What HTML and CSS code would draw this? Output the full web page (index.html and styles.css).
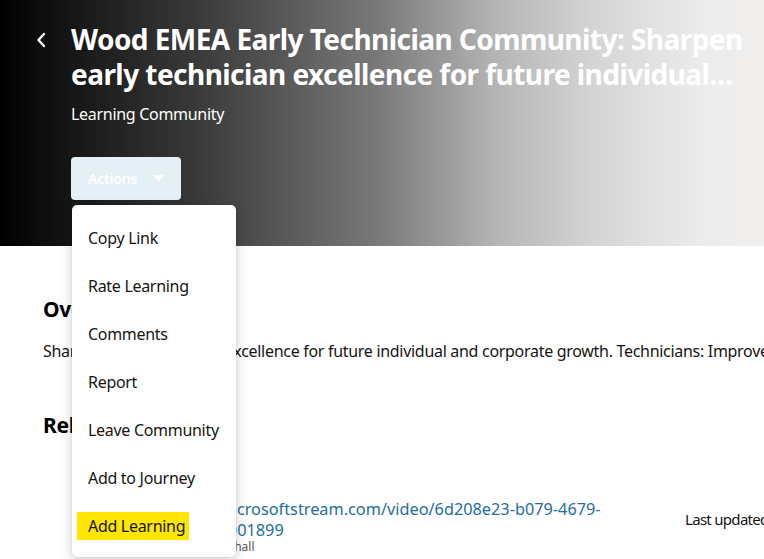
FILE: index.html
```html
<!DOCTYPE html>
<html lang="en">
<head>
<meta charset="utf-8">
<title>Wood EMEA Early Technician Community</title>
<link rel="stylesheet" href="styles.css">
</head>
<body>
<header class="hero">
  <div class="hero-row">
    <button class="back" aria-label="Back">
      <svg width="10" height="16" viewBox="0 0 10 16"><path d="M8 2 L2.5 8 L8 14" fill="none" stroke="#fff" stroke-width="2.4" stroke-linecap="round" stroke-linejoin="round"/></svg>
    </button>
    <div class="hero-text">
      <h1 class="title">Wood EMEA Early Technician Community: Sharpen early technician excellence for future individual and corporate growth</h1>
      <div class="subtitle">Learning Community</div>
      <div class="actions">
        <button class="actions-btn">Actions
          <svg width="12" height="7" viewBox="0 0 12 7"><path d="M0 0 H12 L6 7 Z" fill="#fff"/></svg>
        </button>
        <ul class="menu">
          <li>Copy Link</li>
          <li>Rate Learning</li>
          <li>Comments</li>
          <li>Report</li>
          <li>Leave Community</li>
          <li>Add to Journey</li>
          <li><span class="marked">Add Learning</span></li>
        </ul>
      </div>
    </div>
  </div>
</header>
<main class="content">
  <section class="overview">
    <h2>Overview</h2>
    <p class="desc">Sharpen early technician excellence for future individual and corporate growth. Technicians: Improve your skills and knowledge</p>
  </section>
  <section class="related">
    <h2>Related Learning</h2>
    <div class="rel-row">
      <div class="rel-main">
        <a class="rel-link" href="#">https://web.microsoftstream.com/video/6d208e23-b079-4679-a4f2-0c93eb7001899</a>
        <div class="rel-meta">By Jennifer W. Marshall</div>
      </div>
      <div class="rel-date">Last updated 2 years ago</div>
    </div>
  </section>
</main>
</body>
</html>
```
FILE: styles.css
```css
* { box-sizing: border-box; }
html, body { margin: 0; padding: 0; }
body {
  width: 764px;
  height: 559px;
  overflow: hidden;
  background: #fff;
  font-family: "Noto Sans", "Open Sans", sans-serif;
  color: #161513;
  letter-spacing: -0.3px;
}
.hero {
  height: 246px;
  background: linear-gradient(90deg, #000 0%, #151515 9%, #3a3a3a 26%, #7b7b7b 50%, #b5b5b5 65%, #d5d5d5 78%, #ececec 92%, #f1efed 100%);
  position: relative;
  z-index: 2;
}
.hero-row {
  display: flex;
  padding: 22px 6px 0 31px;
}
.back {
  width: 40px;
  height: 36px;
  padding: 0 0 0 5px;
  margin: 0;
  border: 0;
  background: transparent;
  display: flex;
  align-items: center;
  flex: none;
}
.hero-text { flex: 1; min-width: 0; }
.title {
  margin: 0;
  font-size: 28px;
  line-height: 35px;
  font-weight: 700;
  letter-spacing: -0.55px;
  color: #fff;
  display: -webkit-box;
  -webkit-line-clamp: 2;
  -webkit-box-orient: vertical;
  overflow: hidden;
}
.subtitle {
  margin-top: 10px;
  font-size: 16px;
  line-height: 24px;
  color: #fff;
}
.actions {
  position: relative;
  margin-top: 31px;
  width: 110px;
}
.actions-btn {
  width: 110px;
  height: 43px;
  border: 0;
  border-radius: 4px;
  background: #e4f0f6;
  color: #fff;
  font-family: inherit;
  font-size: 14px;
  font-weight: 600;
  letter-spacing: -0.2px;
  padding: 0 17px;
  display: flex;
  align-items: center;
  gap: 16px;
}
.menu {
  position: absolute;
  top: 48px;
  left: 1px;
  width: 164px;
  margin: 0;
  padding: 9px 0 7px;
  list-style: none;
  background: #fff;
  border-radius: 5px;
  box-shadow: 0 4px 14px rgba(0,0,0,0.18), 0 0 2px rgba(0,0,0,0.12);
}
.menu li {
  height: 48px;
  line-height: 48px;
  padding: 0 16px;
  font-size: 16px;
  color: #161513;
  white-space: nowrap;
}
.marked {
  background: #ffe600;
  padding: 3px 4px 3px 11px;
  margin-left: -11px;
}
.content {
  padding: 0 0 0 43px;
}
.content h2 {
  margin: 0;
  font-size: 21px;
  line-height: 28px;
  font-weight: 700;
  color: #000;
}
.overview { padding-top: 49px; }
.desc {
  margin: 16px 0 0;
  font-size: 16px;
  line-height: 24px;
  white-space: nowrap;
}
.related { padding-top: 48px; }
.rel-row {
  display: flex;
  align-items: flex-start;
  margin-top: 60px;
  padding-left: 82px;
}
.rel-main { width: 490px; flex: none; }
.rel-link {
  display: block;
  font-size: 16.3px;
  line-height: 21px;
  letter-spacing: 0;
  color: #1f6e9e;
  text-decoration: none;
}
.rel-meta {
  margin-top: -1px;
  font-size: 12px;
  line-height: 14px;
  letter-spacing: 0;
  color: #5a5856;
}
.rel-date {
  flex: none;
  margin: 10px 0 0 70px;
  font-size: 15px;
  line-height: 20px;
  letter-spacing: -0.7px;
  white-space: nowrap;
}
```
